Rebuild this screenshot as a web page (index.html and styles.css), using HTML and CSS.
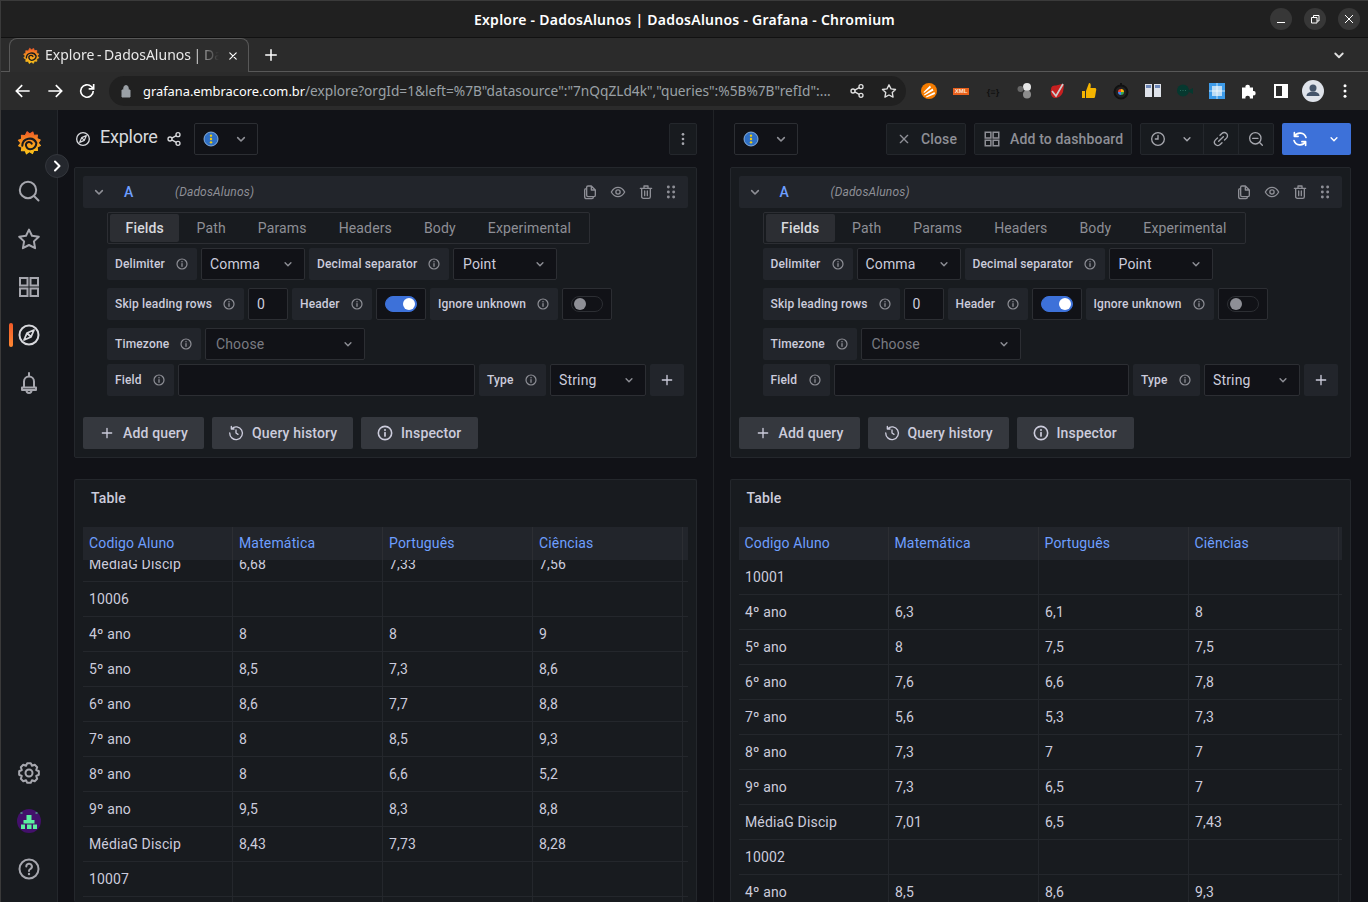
FILE: index.html

```html
<!DOCTYPE html>
<html lang="pt">
<head>
<meta charset="UTF-8">
<title>Explore - DadosAlunos | DadosAlunos - Grafana - Chromium</title>
<link rel="stylesheet" href="styles.css">
</head>
<body>

<svg class="sprite" width="0" height="0">
  <defs>
    <linearGradient id="gf" x1="0" y1="1" x2="0" y2="0">
      <stop offset="0" stop-color="#fcc419"/>
      <stop offset=".55" stop-color="#f79320"/>
      <stop offset="1" stop-color="#f05a28"/>
    </linearGradient>
    <symbol id="i-logo" viewBox="0 0 24 24">
      <path fill="url(#gf)" stroke="url(#gf)" stroke-linejoin="round" d="M10.26 1.6L12.6 3.6L15.6 1.9L16.4 4.8L19.8 4.6L19.4 7.9L22.4 9.2L20.4 11.9L22.6 14.4L19.6 15.7L19.8 19L16.6 18.8L15.2 21.8L12.4 20L9.6 22L8.4 19L5 19.2L5.4 16L2.4 14.6L4.4 12L2.2 9.4L5.2 8.2L5 4.9L8.4 5.2Z"/>
      <path fill="none" stroke="#181b1f" stroke-width="1.900" stroke-linecap="round" d="M5.800 14.500A6.800 6.800 0 0 1 18.800 12A5.800 5.800 0 0 1 13 17.800A4.200 4.200 0 0 1 9.200 13A3 3 0 0 1 14.500 12.500"/>
    </symbol>
    <symbol id="i-compass" viewBox="0 0 24 24">
      <circle cx="12" cy="12" r="9.500" fill="none" stroke="currentColor" stroke-width="2"/>
      <path fill="none" stroke="currentColor" stroke-width="1.800" stroke-linejoin="round" d="M17 7L14 14L7 17L10 10ZM10 10L14 14"/>
    </symbol>
    <symbol id="i-search" viewBox="0 0 24 24">
      <circle cx="11" cy="11" r="8.200" fill="none" stroke="currentColor" stroke-width="2"/>
      <path stroke="currentColor" stroke-width="2" stroke-linecap="round" d="M17 17L21.500 21.500"/>
    </symbol>
    <symbol id="i-star" viewBox="0 0 24 24">
      <path fill="none" stroke="currentColor" stroke-width="2" stroke-linejoin="round" d="M12 2.600L15 8.800L21.800 9.700L16.900 14.400L18.100 21.200L12 18L5.900 21.200L7.100 14.400L2.200 9.700L9 8.800Z"/>
    </symbol>
    <symbol id="i-apps" viewBox="0 0 24 24">
      <path fill="none" stroke="currentColor" stroke-width="2" d="M3 3h7.500v7.500H3zM13.500 3H21v7.500h-7.500zM3 13.500h7.500V21H3zM13.500 13.500H21V21h-7.500z"/>
    </symbol>
    <symbol id="i-bell" viewBox="0 0 24 24">
      <path fill="none" stroke="currentColor" stroke-width="2" stroke-linejoin="round" stroke-linecap="round" d="M7 16.500V10.500a5 5 0 0 1 10 0V16.500M5 16.500h14v2.500H5ZM12 2v3.500M9.500 19.500c0 3.200 5 3.200 5 0"/>
    </symbol>
    <symbol id="i-cog" viewBox="0 0 24 24">
      <path fill="none" stroke="currentColor" stroke-width="2" stroke-linejoin="round" d="M10.260 2.150L13.740 2.150L14.980 4.790L17.740 3.810L20.190 6.260L19.210 9.020L21.850 10.260L21.850 13.740L19.210 14.980L20.190 17.740L17.740 20.190L14.980 19.210L13.740 21.850L10.260 21.850L9.020 19.210L6.260 20.190L3.810 17.740L4.790 14.980L2.150 13.740L2.150 10.260L4.790 9.020L3.810 6.260L6.260 3.810L9.020 4.790Z"/>
      <circle cx="12" cy="12" r="3.500" fill="none" stroke="currentColor" stroke-width="2"/>
    </symbol>
    <symbol id="i-help" viewBox="0 0 24 24">
      <circle cx="12" cy="12" r="9.500" fill="none" stroke="currentColor" stroke-width="2"/>
      <path fill="none" stroke="currentColor" stroke-width="2" stroke-linecap="round" d="M9.300 9.500a2.800 2.800 0 1 1 4 2.500c-.9.500-1.300 1-1.300 2"/>
      <circle cx="12" cy="17" r="1.200" fill="currentColor"/>
    </symbol>
    <symbol id="i-share" viewBox="0 0 24 24">
      <g fill="none" stroke="currentColor" stroke-width="2">
        <circle cx="18" cy="5.500" r="3"/><circle cx="6" cy="12" r="3"/><circle cx="18" cy="18.500" r="3"/>
        <path d="M8.700 10.600L15.300 7M8.700 13.400L15.300 17"/>
      </g>
    </symbol>
    <symbol id="i-info" viewBox="0 0 24 24">
      <circle cx="12" cy="12" r="10" fill="none" stroke="currentColor" stroke-width="2.400"/>
      <path stroke="currentColor" stroke-width="2.600" stroke-linecap="round" d="M12 11.500v5"/>
      <circle cx="12" cy="7.600" r="1.500" fill="currentColor"/>
    </symbol>
    <symbol id="i-down" viewBox="0 0 24 24">
      <path fill="none" stroke="currentColor" stroke-width="2.400" stroke-linecap="round" stroke-linejoin="round" d="M7 10l5 5 5-5"/>
    </symbol>
    <symbol id="i-plus" viewBox="0 0 24 24">
      <path stroke="currentColor" stroke-width="2" stroke-linecap="round" d="M12 5v14M5 12h14"/>
    </symbol>
    <symbol id="i-close" viewBox="0 0 24 24">
      <path stroke="currentColor" stroke-width="2" stroke-linecap="round" d="M6.500 6.500l11 11M17.500 6.500l-11 11"/>
    </symbol>
    <symbol id="i-copy" viewBox="0 0 24 24">
      <path fill="none" stroke="currentColor" stroke-width="2" stroke-linejoin="round" d="M9 3h5l6 6v8a2 2 0 0 1-2 2H9a2 2 0 0 1-2-2V5a2 2 0 0 1 2-2ZM14 3v6h6M7 7H6a2 2 0 0 0-2 2v10a3 3 0 0 0 3 3h8a2 2 0 0 0 2-2v-1"/>
    </symbol>
    <symbol id="i-eye" viewBox="0 0 24 24">
      <path fill="none" stroke="currentColor" stroke-width="2" stroke-linejoin="round" d="M2 12c2.500-4.500 6-7 10-7s7.500 2.500 10 7c-2.500 4.500-6 7-10 7s-7.500-2.500-10-7Z"/>
      <circle cx="12" cy="12" r="3.200" fill="none" stroke="currentColor" stroke-width="2"/>
    </symbol>
    <symbol id="i-trash" viewBox="0 0 24 24">
      <path fill="none" stroke="currentColor" stroke-width="2" stroke-linejoin="round" stroke-linecap="round" d="M3.500 6.500h17M9 6.500V3h6v3.500M5.500 6.500V19a2.500 2.500 0 0 0 2.500 2.500h8a2.500 2.500 0 0 0 2.500-2.500V6.500M10 10.500v7M14 10.500v7"/>
    </symbol>
    <symbol id="i-drag" viewBox="0 0 24 24">
      <g fill="currentColor">
        <circle cx="8" cy="4.500" r="2.200"/><circle cx="16" cy="4.500" r="2.200"/>
        <circle cx="8" cy="12" r="2.200"/><circle cx="16" cy="12" r="2.200"/>
        <circle cx="8" cy="19.500" r="2.200"/><circle cx="16" cy="19.500" r="2.200"/>
      </g>
    </symbol>
    <symbol id="i-dots" viewBox="0 0 24 24">
      <g fill="currentColor"><circle cx="12" cy="5" r="2"/><circle cx="12" cy="12" r="2"/><circle cx="12" cy="19" r="2"/></g>
    </symbol>
    <symbol id="i-history" viewBox="0 0 24 24">
      <path fill="none" stroke="currentColor" stroke-width="2" stroke-linecap="round" stroke-linejoin="round" d="M5.500 5.500A9.500 9.500 0 1 1 2.600 12M5 2v4h4M12 7.500V12l3 2"/>
    </symbol>
    <symbol id="i-clock" viewBox="0 0 24 24">
      <circle cx="12" cy="12" r="9.500" fill="none" stroke="currentColor" stroke-width="2"/>
      <path fill="none" stroke="currentColor" stroke-width="2" stroke-linecap="round" d="M12 6.500V12H8"/>
    </symbol>
    <symbol id="i-link" viewBox="0 0 24 24">
      <path fill="none" stroke="currentColor" stroke-width="2" stroke-linecap="round" d="M10.500 6.500l2.800-2.800a4.200 4.200 0 0 1 7 7l-3 2.800M13.500 17.500l-2.800 2.800a4.200 4.200 0 0 1-7-7l3-2.800M8.500 15.500l7-7"/>
    </symbol>
    <symbol id="i-zoomout" viewBox="0 0 24 24">
      <circle cx="11" cy="11" r="8.500" fill="none" stroke="currentColor" stroke-width="2"/>
      <path stroke="currentColor" stroke-width="2" stroke-linecap="round" d="M17 17l4.500 4.500M7 11h8"/>
    </symbol>
    <symbol id="i-sync" viewBox="0 0 24 24">
      <path fill="none" stroke="currentColor" stroke-width="2.200" stroke-linecap="round" stroke-linejoin="round" d="M4.500 8.500A8.500 8.500 0 0 1 20 10M4.500 3.500v5h5M19.500 15.500A8.500 8.500 0 0 1 4 14M19.500 20.500v-5h-5"/>
    </symbol>
    <symbol id="i-ds" viewBox="0 0 24 24">
      <circle cx="12" cy="12" r="10.500" fill="#2f6fc4" stroke="#9ec4ee" stroke-width="1.200"/>
      <g fill="#f2cc0c"><circle cx="12" cy="7" r="1.800"/><circle cx="12" cy="12" r="1.800"/><circle cx="12" cy="17" r="1.800"/></g>
    </symbol>
  </defs>
</svg>

<header class="chrome">
  <div class="titlebar">
    <span class="win-title">Explore - DadosAlunos | DadosAlunos - Grafana - Chromium</span>
    <div class="win-btns">
      <span class="win-btn"><svg width="12" height="12" viewBox="0 0 12 12"><path d="M2 9.500h8" stroke="#fff" stroke-width="1"/></svg></span>
      <span class="win-btn"><svg width="12" height="12" viewBox="0 0 12 12"><path d="M2.500 4.500h5.500v5.500H2.500zM4.500 4.500V2.500H10v5.500H8" fill="none" stroke="#fff" stroke-width="1"/></svg></span>
      <span class="win-btn"><svg width="12" height="12" viewBox="0 0 12 12"><path d="M2 2l8 8M10 2l-8 8" stroke="#fff" stroke-width="1"/></svg></span>
    </div>
  </div>
  <div class="tabstrip">
    <div class="tab">
      <svg class="fav"><use href="#i-logo"/></svg>
      <span class="tab-title">Explore - DadosAlunos | DadosAlunos</span>
      <svg class="tab-x"><use href="#i-close"/></svg>
    </div>
    <svg class="newtab"><use href="#i-plus"/></svg>
    <svg class="tabs-menu"><use href="#i-down"/></svg>
  </div>
  <div class="toolbar">
    <svg class="nav-ic" viewBox="0 0 24 24"><path d="M20 12H5M11 5l-7 7 7 7" fill="none" stroke="#fff" stroke-width="2"/></svg>
    <svg class="nav-ic" viewBox="0 0 24 24"><path d="M4 12h15M13 5l7 7-7 7" fill="none" stroke="#fff" stroke-width="2"/></svg>
    <svg class="nav-ic" viewBox="0 0 24 24"><path d="M19.500 12a7.500 7.500 0 1 1-2.300-5.400L20 9.500M20 3.500v6h-6" fill="none" stroke="#fff" stroke-width="2"/></svg>
    <div class="omnibox">
      <svg class="lock" viewBox="0 0 12 14"><path d="M2 6h8v7H2zM3.800 6V3.800a2.200 2.200 0 0 1 4.400 0V6" fill="#9aa0a6" stroke="#9aa0a6"/></svg>
      <span class="url"><b>grafana.embracore.com.br</b>/explore?orgId=1&amp;left=%7B"datasource":"7nQqZLd4k","queries":%5B%7B"refId":...</span>
      <svg class="omni-ic"><use href="#i-share"/></svg>
      <svg class="omni-ic"><use href="#i-star"/></svg>
    </div>
    <div class="exts">
      <span class="ext"><svg width="16" height="16" viewBox="0 0 16 16"><circle cx="8" cy="8" r="8" fill="#f57c00"/><path d="M2.500 9L9 2.500L10 4.500L3 10ZM3 11.500L11.500 5.500L12.500 7.500L3.500 12.500ZM5 13.500L13.500 9L14 11L5.500 14.500Z" fill="#fff"/></svg></span>
      <span class="ext"><span class="ext-xml">XML</span></span>
      <span class="ext ext-json">{≡}</span>
      <span class="ext"><svg width="18" height="18" viewBox="0 0 18 18"><circle cx="11" cy="5" r="4" fill="#e6e6e6"/><circle cx="11" cy="12.500" r="4" fill="#8c8c8c"/><circle cx="4.500" cy="7" r="3" fill="#666"/></svg></span>
      <span class="ext"><svg width="16" height="16" viewBox="0 0 16 16"><path d="M2 6c0-3 3-4 5-3.500L13 1l2 1-1 7c-1 3-4 6-8 6-3 0-5-4-4-9Z" fill="#c62020"/><path d="M3 8l4 5 7-12" fill="none" stroke="#ccc" stroke-width="1.700"/></svg></span>
      <span class="ext"><svg width="16" height="18" viewBox="0 0 16 18"><path d="M1 9h3v7H1zM5 9l3-8c2 0 2 2 1.500 5H14c1.500 0 1.500 2 1 3l-1 6c-.3 1-1 1-2 1H5Z" fill="#f4b400"/></svg></span>
      <span class="ext"><svg width="16" height="18" viewBox="0 0 16 18"><circle cx="8" cy="10" r="6.500" fill="#222" stroke="#111" stroke-width="2"/><path d="M8 1v3" stroke="#111" stroke-width="2"/><path d="M5 10a3 3 0 0 1 3-3v3Z" fill="#ea4335"/><path d="M8 7a3 3 0 0 1 3 3H8Z" fill="#fbbc05"/><path d="M11 10a3 3 0 0 1-3 3v-3Z" fill="#34a853"/><path d="M8 13a3 3 0 0 1-3-3h3Z" fill="#4285f4"/></svg></span>
      <span class="ext"><svg width="16" height="14" viewBox="0 0 16 14"><rect width="7" height="13" fill="#dfe3ea"/><rect x="9" width="7" height="13" fill="#dfe3ea"/><rect x="1" y="1" width="5" height="3" fill="#6d87b8"/><rect x="10" y="1" width="5" height="3" fill="#6d87b8"/></svg></span>
      <span class="ext"><svg width="16" height="14" viewBox="0 0 16 14"><circle cx="6" cy="6.500" r="6" fill="#06382f"/><path d="M12 6l4-2v6l-4-2Z" fill="#06382f"/><path d="M3 6.500h1M5.500 6.500h1M8 6.500h1" stroke="#2a6a5c"/></svg></span>
      <span class="ext"><svg width="16" height="16" viewBox="0 0 16 16"><rect width="16" height="16" fill="#3d9be9"/><rect x="3" y="3" width="10" height="10" fill="#bcdcf5"/><path d="M0 8h16M8 0v16" stroke="#fff" stroke-width=".7"/></svg></span>
      <span class="ext"><svg width="16" height="16" viewBox="0 0 16 16"><path d="M1 4.500h3.500a2.200 2.200 0 1 1 4.300 0H12V8a2.200 2.200 0 1 1 0 4.300V15.500H8.800a2.200 2.200 0 1 0-4.300 0H1Z" fill="#fff"/></svg></span>
      <span class="ext"><svg width="14" height="14" viewBox="0 0 14 14"><path d="M0 0h14v14H0zM2 2v10h6V2z" fill="#fff" fill-rule="evenodd"/></svg></span>
      <span class="ext"><svg width="22" height="22" viewBox="0 0 22 22"><circle cx="11" cy="11" r="11" fill="#dfe3ea"/><circle cx="11" cy="8" r="3.500" fill="#44546a"/><path d="M4.500 16c0-6 13-6 13 0Z" fill="#44546a"/></svg></span>
      <span class="ext ext-dots"><svg width="18" height="18"><use href="#i-dots"/></svg></span>
    </div>
  </div>
</header>

<div class="app">
  <nav class="sidebar">
    <div class="side-group">
      <a class="side-item"><svg class="side-logo"><use href="#i-logo"/></svg></a>
      <a class="side-item"><svg class="side-ic"><use href="#i-search"/></svg></a>
      <a class="side-item"><svg class="side-ic"><use href="#i-star"/></svg></a>
      <a class="side-item"><svg class="side-ic"><use href="#i-apps"/></svg></a>
      <a class="side-item active"><svg class="side-ic"><use href="#i-compass"/></svg></a>
      <a class="side-item"><svg class="side-ic"><use href="#i-bell"/></svg></a>
    </div>
    <div class="side-group">
      <a class="side-item"><svg class="side-ic"><use href="#i-cog"/></svg></a>
      <a class="side-item">
        <svg class="side-avatar" viewBox="0 0 24 24"><circle cx="12" cy="12" r="12" fill="#43106b"/><path d="M9.500 6h5v5h3v3.500h-11V11h3ZM4 15.500h4V20H4zM10 15.500h4.500V20H10zM16 15.500h4V20h-4zM3.500 3.500h2v1h-2zM18.500 3.500h2v1h-2z" fill="#5bf0a0"/></svg>
      </a>
      <a class="side-item"><svg class="side-ic"><use href="#i-help"/></svg></a>
    </div>
    <span class="side-expand"><svg width="16" height="16" viewBox="0 0 16 16"><path d="M6 3.500L10.500 8 6 12.500" fill="none" stroke="#fff" stroke-width="2" stroke-linecap="round" stroke-linejoin="round"/></svg></span>
  </nav>

  <main class="explore">
    <section class="pane pane-left">
      <div class="topbar">
        <svg class="ic-16 page-ic"><use href="#i-compass"/></svg>
        <h1 class="page-title">Explore</h1>
        <svg class="ic-16 page-share"><use href="#i-share"/></svg>
        <div class="ds-picker"><svg class="ic-16"><use href="#i-ds"/></svg><svg class="ic-16 caret"><use href="#i-down"/></svg></div>
        <span class="spacer"></span>
        <button class="tbtn tbtn-menu"><svg class="ic-16"><use href="#i-dots"/></svg></button>
      </div>

      <div class="panel query">
        <div class="q-head">
          <svg class="ic-16 q-caret"><use href="#i-down"/></svg>
          <span class="q-letter">A</span>
          <span class="q-ds">(DadosAlunos)</span>
          <span class="spacer"></span>
          <svg class="ic-16 q-ic"><use href="#i-copy"/></svg>
          <svg class="ic-16 q-ic"><use href="#i-eye"/></svg>
          <svg class="ic-16 q-ic"><use href="#i-trash"/></svg>
          <svg class="ic-16 q-ic q-drag"><use href="#i-drag"/></svg>
        </div>
        <div class="q-form">
          <div class="tabs">
            <span class="qtab on">Fields</span><span class="qtab">Path</span><span class="qtab">Params</span><span class="qtab">Headers</span><span class="qtab">Body</span><span class="qtab">Experimental</span>
          </div>
          <div class="row">
            <label class="lbl w-delim">Delimiter<svg class="ic-info"><use href="#i-info"/></svg></label>
            <div class="sel w-comma">Comma<svg class="ic-14"><use href="#i-down"/></svg></div>
            <label class="lbl w-dec">Decimal separator<svg class="ic-info"><use href="#i-info"/></svg></label>
            <div class="sel w-point">Point<svg class="ic-14"><use href="#i-down"/></svg></div>
          </div>
          <div class="row row-2">
            <label class="lbl w-skip">Skip leading rows<svg class="ic-info"><use href="#i-info"/></svg></label>
            <div class="sel w-zero">0</div>
            <label class="lbl w-header">Header<svg class="ic-info"><use href="#i-info"/></svg></label>
            <div class="sw-box"><span class="sw on"></span></div>
            <label class="lbl w-ignore">Ignore unknown<svg class="ic-info"><use href="#i-info"/></svg></label>
            <div class="sw-box"><span class="sw"></span></div>
          </div>
          <div class="row row-2">
            <label class="lbl w-tz">Timezone<svg class="ic-info"><use href="#i-info"/></svg></label>
            <div class="sel w-choose muted">Choose<svg class="ic-14"><use href="#i-down"/></svg></div>
          </div>
          <div class="row row-3">
            <label class="lbl w-field">Field<svg class="ic-info"><use href="#i-info"/></svg></label>
            <div class="sel grow"></div>
            <label class="lbl w-type">Type<svg class="ic-info"><use href="#i-info"/></svg></label>
            <div class="sel w-string">String<svg class="ic-14"><use href="#i-down"/></svg></div>
            <button class="plus"><svg class="ic-16"><use href="#i-plus"/></svg></button>
          </div>
        </div>
        <div class="q-actions">
          <button class="btn w-add"><svg class="ic-16"><use href="#i-plus"/></svg>Add query</button>
          <button class="btn w-hist"><svg class="ic-16"><use href="#i-history"/></svg>Query history</button>
          <button class="btn w-insp"><svg class="ic-16"><use href="#i-info"/></svg>Inspector</button>
        </div>
      </div>

      <div class="panel result">
        <div class="res-title">Table</div>
        <div class="thead">
          <span class="th">Codigo Aluno</span><span class="th">Matemática</span><span class="th">Português</span><span class="th">Ciências</span>
        </div>
        <div class="tbody">
          <div class="rows rows-scrolled">
            <div class="tr"><span>MédiaG Discip</span><span>6,68</span><span>7,33</span><span>7,56</span></div>
            <div class="tr"><span>10006</span><span></span><span></span><span></span></div>
            <div class="tr"><span>4º ano</span><span>8</span><span>8</span><span>9</span></div>
            <div class="tr"><span>5º ano</span><span>8,5</span><span>7,3</span><span>8,6</span></div>
            <div class="tr"><span>6º ano</span><span>8,6</span><span>7,7</span><span>8,8</span></div>
            <div class="tr"><span>7º ano</span><span>8</span><span>8,5</span><span>9,3</span></div>
            <div class="tr"><span>8º ano</span><span>8</span><span>6,6</span><span>5,2</span></div>
            <div class="tr"><span>9º ano</span><span>9,5</span><span>8,3</span><span>8,8</span></div>
            <div class="tr"><span>MédiaG Discip</span><span>8,43</span><span>7,73</span><span>8,28</span></div>
            <div class="tr"><span>10007</span><span></span><span></span><span></span></div>
            <div class="tr"><span></span><span></span><span></span><span></span></div>
          </div>
        </div>
      </div>
    </section>

    <section class="pane pane-right">
      <div class="topbar">
        <div class="ds-picker ds-right"><svg class="ic-16"><use href="#i-ds"/></svg><svg class="ic-16 caret"><use href="#i-down"/></svg></div>
        <span class="spacer"></span>
        <button class="tbtn w-close"><svg class="ic-16"><use href="#i-close"/></svg>Close</button>
        <button class="tbtn w-dash"><svg class="ic-18"><use href="#i-apps"/></svg>Add to dashboard</button>
        <div class="tgroup">
          <button class="tseg w-time"><svg class="ic-16"><use href="#i-clock"/></svg><svg class="ic-14"><use href="#i-down"/></svg></button>
          <button class="tseg w-link"><svg class="ic-16"><use href="#i-link"/></svg></button>
          <button class="tseg w-zoom"><svg class="ic-16"><use href="#i-zoomout"/></svg></button>
        </div>
        <div class="run">
          <span class="run-ic"><svg class="ic-18"><use href="#i-sync"/></svg></span>
          <span class="run-caret"><svg class="ic-14"><use href="#i-down"/></svg></span>
        </div>
      </div>

      <div class="panel query">
        <div class="q-head">
          <svg class="ic-16 q-caret"><use href="#i-down"/></svg>
          <span class="q-letter">A</span>
          <span class="q-ds">(DadosAlunos)</span>
          <span class="spacer"></span>
          <svg class="ic-16 q-ic"><use href="#i-copy"/></svg>
          <svg class="ic-16 q-ic"><use href="#i-eye"/></svg>
          <svg class="ic-16 q-ic"><use href="#i-trash"/></svg>
          <svg class="ic-16 q-ic q-drag"><use href="#i-drag"/></svg>
        </div>
        <div class="q-form">
          <div class="tabs">
            <span class="qtab on">Fields</span><span class="qtab">Path</span><span class="qtab">Params</span><span class="qtab">Headers</span><span class="qtab">Body</span><span class="qtab">Experimental</span>
          </div>
          <div class="row">
            <label class="lbl w-delim">Delimiter<svg class="ic-info"><use href="#i-info"/></svg></label>
            <div class="sel w-comma">Comma<svg class="ic-14"><use href="#i-down"/></svg></div>
            <label class="lbl w-dec">Decimal separator<svg class="ic-info"><use href="#i-info"/></svg></label>
            <div class="sel w-point">Point<svg class="ic-14"><use href="#i-down"/></svg></div>
          </div>
          <div class="row row-2">
            <label class="lbl w-skip">Skip leading rows<svg class="ic-info"><use href="#i-info"/></svg></label>
            <div class="sel w-zero">0</div>
            <label class="lbl w-header">Header<svg class="ic-info"><use href="#i-info"/></svg></label>
            <div class="sw-box"><span class="sw on"></span></div>
            <label class="lbl w-ignore">Ignore unknown<svg class="ic-info"><use href="#i-info"/></svg></label>
            <div class="sw-box"><span class="sw"></span></div>
          </div>
          <div class="row row-2">
            <label class="lbl w-tz">Timezone<svg class="ic-info"><use href="#i-info"/></svg></label>
            <div class="sel w-choose muted">Choose<svg class="ic-14"><use href="#i-down"/></svg></div>
          </div>
          <div class="row row-3">
            <label class="lbl w-field">Field<svg class="ic-info"><use href="#i-info"/></svg></label>
            <div class="sel grow"></div>
            <label class="lbl w-type">Type<svg class="ic-info"><use href="#i-info"/></svg></label>
            <div class="sel w-string">String<svg class="ic-14"><use href="#i-down"/></svg></div>
            <button class="plus"><svg class="ic-16"><use href="#i-plus"/></svg></button>
          </div>
        </div>
        <div class="q-actions">
          <button class="btn w-add"><svg class="ic-16"><use href="#i-plus"/></svg>Add query</button>
          <button class="btn w-hist"><svg class="ic-16"><use href="#i-history"/></svg>Query history</button>
          <button class="btn w-insp"><svg class="ic-16"><use href="#i-info"/></svg>Inspector</button>
        </div>
      </div>

      <div class="panel result">
        <div class="res-title">Table</div>
        <div class="thead">
          <span class="th">Codigo Aluno</span><span class="th">Matemática</span><span class="th">Português</span><span class="th">Ciências</span>
        </div>
        <div class="tbody">
          <div class="rows">
            <div class="tr"><span>10001</span><span></span><span></span><span></span></div>
            <div class="tr"><span>4º ano</span><span>6,3</span><span>6,1</span><span>8</span></div>
            <div class="tr"><span>5º ano</span><span>8</span><span>7,5</span><span>7,5</span></div>
            <div class="tr"><span>6º ano</span><span>7,6</span><span>6,6</span><span>7,8</span></div>
            <div class="tr"><span>7º ano</span><span>5,6</span><span>5,3</span><span>7,3</span></div>
            <div class="tr"><span>8º ano</span><span>7,3</span><span>7</span><span>7</span></div>
            <div class="tr"><span>9º ano</span><span>7,3</span><span>6,5</span><span>7</span></div>
            <div class="tr"><span>MédiaG Discip</span><span>7,01</span><span>6,5</span><span>7,43</span></div>
            <div class="tr"><span>10002</span><span></span><span></span><span></span></div>
            <div class="tr"><span>4º ano</span><span>8,5</span><span>8,6</span><span>9,3</span></div>
          </div>
        </div>
      </div>
    </section>
  </main>
</div>

</body>
</html>
```

FILE: styles.css

```css
* {
    box-sizing: border-box;
}
html, body {
    height: 100%;
    margin: 0;
    overflow: hidden;
}
body {
    display: flex;
    flex-direction: column;
    background: #111217;
    color: #ccccdc;
    font: 14px Roboto, sans-serif;
    letter-spacing: .15px;
    border-left: 1px solid #3a3a3a;
}
button {
    font: inherit;
    letter-spacing: inherit;
    color: inherit;
    cursor: pointer;
}
.sprite {
    position: absolute;
}

/* browser frame */
.chrome {
    flex: none;
    font-family: "Noto Sans", sans-serif;
    letter-spacing: 0;
}
.titlebar {
    height: 38px;
    display: flex;
    align-items: center;
    justify-content: center;
    background: #202020;
    border-top: 1px solid #3a3a3a;
    border-bottom: 1px solid #111;
    position: relative;
}
.win-title {
    color: #fff;
    font-size: 14px;
    font-weight: 600;
    letter-spacing: .25px;
}
.win-btns {
    position: absolute;
    right: 8px;
    top: 7px;
    display: flex;
    gap: 12px;
}
.win-btn {
    width: 22px;
    height: 22px;
    border-radius: 50%;
    background: #373737;
    display: flex;
    align-items: center;
    justify-content: center;
}
.tabstrip {
    height: 34px;
    display: flex;
    align-items: center;
    background: #2b2b2b;
    padding-left: 8px;
    border-bottom: 1px solid #585858;
}
.tab {
    width: 240px;
    height: 34px;
    display: flex;
    align-items: center;
    padding: 0 8px 0 12px;
    background: #2d2d2d;
    border: 1px solid #585858;
    border-bottom: none;
    border-radius: 8px 8px 0 0;
    margin-top: 1px;
}
.fav {
    width: 18px;
    height: 18px;
    flex: none;
}
.tab-title {
    flex: 1;
    margin-left: 5px;
    padding-bottom: 2px;
    color: #e8e8e8;
    font-size: 14px;
    word-spacing: -1px;
    white-space: nowrap;
    overflow: hidden;
    -webkit-mask-image: linear-gradient(to right, #000 85%, transparent);
    mask-image: linear-gradient(to right, #000 85%, transparent);
}
.tab-x {
    width: 14px;
    height: 14px;
    color: #fff;
    margin-left: 7px;
    flex: none;
}
.newtab {
    width: 18px;
    height: 18px;
    color: #fff;
    margin-left: 13px;
}
.tabs-menu {
    width: 18px;
    height: 18px;
    color: #e0e0e0;
    margin-left: auto;
    margin-right: 20px;
}
.toolbar {
    height: 38px;
    display: flex;
    align-items: center;
    background: #2b2b2b;
    padding-left: 12px;
}
.nav-ic {
    width: 20px;
    height: 20px;
    margin-right: 12px;
    flex: none;
}
.omnibox {
    width: 797px;
    height: 30px;
    display: flex;
    align-items: center;
    background: #202020;
    border-radius: 15px;
    padding: 0 9px 0 11px;
    flex: none;
}
.lock {
    width: 12px;
    height: 14px;
    flex: none;
}
.url {
    margin-left: 11px;
    padding-bottom: 2px;
    width: 690px;
    flex: none;
    font-size: 13.7px;
    color: #9aa0a6;
    white-space: nowrap;
    overflow: hidden;
}
.url b {
    font-size: 12.85px;
    font-weight: 400;
    color: #fff;
}
.omni-ic {
    width: 16px;
    height: 16px;
    color: #e0e0e0;
    margin-left: 16px;
    flex: none;
}
.exts {
    display: flex;
    margin-left: 7px;
}
.ext {
    width: 32px;
    height: 32px;
    display: flex;
    align-items: center;
    justify-content: center;
    flex: none;
}
.ext-xml {
    width: 16px;
    height: 7px;
    background: #e8601c;
    color: #ffe6d0;
    font: 700 6px/7px "Liberation Sans", sans-serif;
    text-align: center;
}
.ext-json {
    font-size: 9px;
    color: #111;
    font-weight: 700;
}
.ext-dots {
    color: #fff;
}

/* grafana shell */
.app {
    flex: 1;
    min-height: 0;
    display: flex;
}
.sidebar {
    width: 57px;
    flex: none;
    display: flex;
    flex-direction: column;
    justify-content: space-between;
    padding: 9px 0;
    background: #181b1f;
    border-right: 1px solid #24272c;
    position: relative;
}
.side-item {
    height: 48px;
    display: flex;
    align-items: center;
    justify-content: center;
    color: #a6a7ae;
    position: relative;
}
.side-ic {
    width: 24px;
    height: 24px;
}
.side-logo {
    width: 26px;
    height: 26px;
}
.side-avatar {
    width: 24px;
    height: 24px;
}
.side-item.active {
    color: #d8d9dd;
}
.side-item.active::before {
    content: "";
    position: absolute;
    left: 8px;
    top: 12px;
    width: 4px;
    height: 24px;
    border-radius: 2px;
    background: linear-gradient(#f05a28, #ff8833);
}
.side-expand {
    position: absolute;
    left: 44px;
    top: 44px;
    width: 24px;
    height: 24px;
    border-radius: 50%;
    background: #24272d;
    border: 1px solid #33363c;
    display: flex;
    align-items: center;
    justify-content: center;
    z-index: 2;
}

.explore {
    flex: 1;
    min-width: 0;
    display: flex;
}
.pane {
    display: flex;
    flex-direction: column;
    padding: 13px 17px 0 16px;
    min-width: 0;
}
.pane-left {
    width: 656px;
    padding-right: 16px;
    border-right: 1px solid #202226;
}
.pane-right {
    flex: 1;
}
.pane-right .panel {
    padding-left: 7.5px;
}
.pane-right .tr span {
    padding-left: 6.5px;
}
.spacer {
    flex: 1;
}

/* toolbar above the query */
.topbar {
    height: 32px;
    display: flex;
    align-items: center;
    gap: 8px;
    flex: none;
    margin-bottom: 12px;
}
.ic-14 {
    width: 14px;
    height: 14px;
    flex: none;
}
.ic-16 {
    width: 16px;
    height: 16px;
    flex: none;
}
.ic-18 {
    width: 18px;
    height: 18px;
    flex: none;
}
.ic-info {
    width: 12px;
    height: 12px;
    flex: none;
    color: #8e8f96;
    margin-left: auto;
    margin-right: 1px;
}
.page-ic {
    margin-left: 1px;
    color: #d8d9dd;
}
.page-title {
    margin: 0 0 0 1px;
    font-size: 18px;
    font-weight: 400;
    letter-spacing: -.25px;
    color: #d8d9dd;
    line-height: 26px;
    position: relative;
    top: -2px;
}
.page-share {
    color: #d8d9dd;
    margin-right: 4px;
}
.ds-picker {
    width: 64px;
    height: 32px;
    display: flex;
    align-items: center;
    justify-content: space-between;
    padding: 0 8px;
    background: #111217;
    border: 1px solid #2c2e33;
    border-radius: 2px;
}
.ds-right {
    margin-left: 4px;
}
.caret {
    color: #8e8f96;
}
.tbtn {
    height: 32px;
    display: flex;
    align-items: center;
    gap: 9px;
    padding: 0 8px 0 9px;
    background: #181b1f;
    border: 1px solid #24272c;
    border-radius: 2px;
    color: #8e8f96;
    font-weight: 500;
}
.tbtn-menu {
    width: 28px;
    padding: 0;
    justify-content: center;
    color: #a6a7ae;
}
.w-close {
    width: 80px;
}
.w-dash {
    width: 158px;
    padding: 0 8px;
    white-space: nowrap;
}
.tgroup {
    display: flex;
    height: 32px;
    background: #181b1f;
    border: 1px solid #24272c;
    border-radius: 2px;
}
.tseg {
    background: none;
    border: none;
    border-right: 1px solid #24272c;
    padding: 0;
    display: flex;
    align-items: center;
    justify-content: center;
    gap: 14px;
    color: #a6a7ae;
}
.tseg:last-child {
    border-right: none;
}
.w-time {
    width: 63px;
}
.w-link {
    width: 35px;
}
.w-zoom {
    width: 34px;
}
.run {
    width: 69px;
    height: 32px;
    display: flex;
    background: #3d71d9;
    border-radius: 2px;
    color: #fff;
}
.run-ic {
    width: 36px;
    display: flex;
    align-items: center;
    justify-content: center;
}
.run-caret {
    flex: 1;
    display: flex;
    align-items: center;
    justify-content: center;
    padding-right: 1px;
}

/* panels */
.panel {
    background: #181b1f;
    border: 1px solid #24272c;
    border-radius: 2px;
    padding: 8px;
    flex: none;
}
.query {
    height: 291px;
}
.q-head {
    height: 32px;
    display: flex;
    align-items: center;
    background: #22252b;
    border-radius: 2px;
    padding: 0 9px 0 8px;
}
.q-caret {
    color: #8e8f96;
}
.q-letter {
    margin-left: 17px;
    width: 10px;
    color: #6e9fff;
    font-weight: 500;
}
.q-ds {
    margin-left: 41px;
    font-size: 12px;
    font-style: italic;
    color: #8e8f96;
}
.q-ic {
    color: #8e8f96;
    margin-left: 12px;
}
.q-drag {
    margin-left: 9px;
}
.q-form {
    margin: 4px 4px 0 24px;
}
.tabs {
    width: 483px;
    height: 32px;
    display: flex;
    align-items: center;
    padding: 0 2px;
    border: 1px solid #2c2e33;
    border-radius: 2px;
    color: #8e8f96;
}
.qtab {
    padding: 0 16px;
    line-height: 28px;
    border-radius: 2px;
}
.qtab.on {
    width: 70px;
    padding: 0;
    text-align: center;
    background: #2c2e33;
    color: #d8d9dd;
    font-weight: 500;
    margin-right: 1px;
}
.row {
    display: flex;
    gap: 4px;
    height: 32px;
    margin-top: 4px;
}
.row-2 {
    margin-top: 8px;
}
.row-3 {
    margin-top: 4px;
}
.lbl {
    height: 32px;
    display: flex;
    align-items: center;
    padding: 0 8px;
    background: #22252b;
    border-radius: 2px;
    color: #ccccdc;
    font-size: 12px;
    font-weight: 500;
    flex: none;
}
.sel {
    height: 32px;
    display: flex;
    align-items: center;
    justify-content: space-between;
    padding: 0 9px 0 8px;
    background: #111217;
    border: 1px solid #2c2e33;
    border-radius: 2px;
    color: #ccccdc;
    flex: none;
}
.sel svg {
    color: #8e8f96;
}
.sel.muted {
    color: #7a7b82;
}
.grow {
    flex: 1;
}
.w-delim { width: 90px; }
.w-comma { width: 104px; }
.w-dec { width: 140px; }
.w-point { width: 104px; padding-left: 9px; }
.w-skip { width: 137px; }
.w-zero { width: 40px; }
.w-header { width: 80px; }
.w-ignore { width: 128px; }
.w-tz { width: 94px; }
.w-choose { width: 160px; padding-left: 10px; }
.w-field { width: 67px; }
.w-type { width: 67px; }
.w-string { width: 96px; }
.sw-box {
    width: 50px;
    height: 32px;
    display: flex;
    align-items: center;
    justify-content: center;
    background: #111217;
    border: 1px solid #2c2e33;
    border-radius: 2px;
    flex: none;
}
.sw {
    width: 32px;
    height: 16px;
    border-radius: 8px;
    border: 1px solid #2c2e33;
    background: #111217;
    position: relative;
}
.sw::after {
    content: "";
    position: absolute;
    left: 2px;
    top: 1px;
    width: 12px;
    height: 12px;
    border-radius: 50%;
    background: #8e8f96;
}
.sw.on {
    background: #3d71d9;
    border-color: #3d71d9;
}
.sw.on::after {
    left: 17px;
    background: #fff;
}
.plus {
    width: 34px;
    height: 32px;
    padding: 0;
    display: flex;
    align-items: center;
    justify-content: center;
    background: #22252b;
    border: none;
    border-radius: 2px;
    color: #ccccdc;
}
.q-actions {
    display: flex;
    gap: 8px;
    margin-top: 21px;
}
.btn {
    height: 32px;
    display: flex;
    align-items: center;
    gap: 8px;
    padding: 0 0 0 16px;
    background: #35383e;
    border: none;
    border-radius: 2px;
    color: #ccccdc;
    font-weight: 500;
    white-space: nowrap;
    flex: none;
}
.w-add {
    width: 121px;
}
.w-hist {
    width: 141px;
}
.w-insp {
    width: 117px;
}

/* result table */
.result {
    margin-top: 21px;
    flex: 1;
    min-height: 0;
    display: flex;
    flex-direction: column;
    padding-bottom: 0;
    border-bottom: none;
}
.res-title {
    height: 39px;
    padding-left: 8px;
    font-weight: 500;
    color: #ccccdc;
    line-height: 20px;
    flex: none;
}
.thead {
    height: 33px;
    display: flex;
    background: #22252b;
    flex: none;
}
.th {
    width: 150px;
    padding: 0 6px;
    line-height: 33px;
    color: #6e9fff;
    border-right: 1px solid #2c2e33;
    flex: none;
}
.tbody {
    flex: 1;
    min-height: 0;
    overflow: hidden;
}
.rows-scrolled {
    margin-top: -13px;
}
.tr {
    height: 35px;
    display: flex;
    border-bottom: 1px solid #24272c;
}
.tr span {
    width: 150px;
    padding: 0 6px;
    line-height: 34px;
    border-right: 1px solid #24272c;
    flex: none;
}
```
